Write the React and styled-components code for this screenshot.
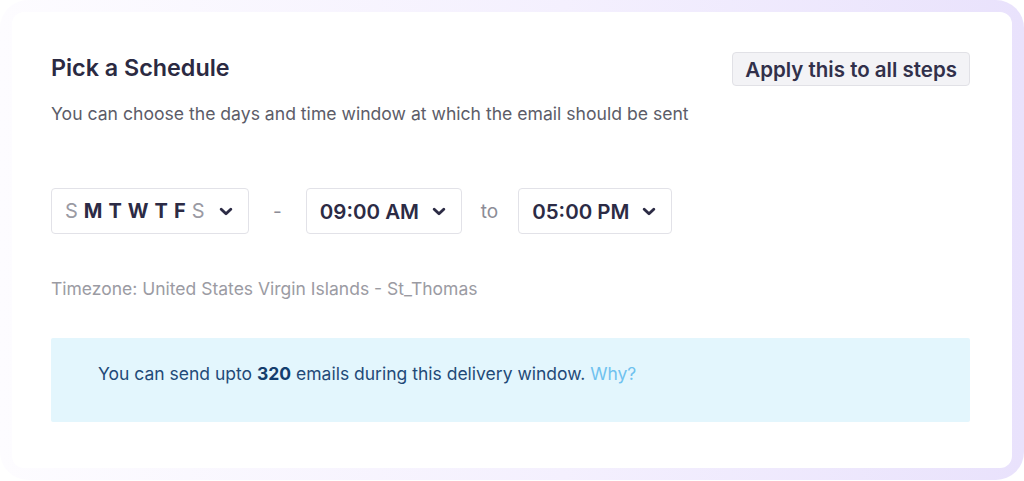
import styled, { createGlobalStyle } from "styled-components";

const GlobalStyle = createGlobalStyle`
  html, body {
    margin: 0;
    padding: 0;
    background: #ffffff;
  }
  body {
    font-family: Inter, "Noto Sans", sans-serif;
  }
`;

const Chevron = () => (
  <svg width="14" height="9" viewBox="0 0 14 9" fill="none">
    <path
      d="M2.2 2.2 L7 6.7 L11.8 2.2"
      stroke="#2c2b45"
      strokeWidth="2.9"
      strokeLinecap="round"
      strokeLinejoin="round"
    />
  </svg>
);

const days = [
  { label: "S", on: false },
  { label: "M", on: true },
  { label: "T", on: true },
  { label: "W", on: true },
  { label: "T", on: true },
  { label: "F", on: true },
  { label: "S", on: false },
];

export default function App() {
  return (
    <>
      <GlobalStyle />
      <Frame>
        <Card>
          <Header>
            <Title>Pick a Schedule</Title>
            <ApplyButton>Apply this to all steps</ApplyButton>
          </Header>
          <Subtitle>
            You can choose the days and time window at which the email should be sent
          </Subtitle>

          <SelectRow>
            <Select $width={198}>
              <Days>
                {days.map((d, i) => (
                  <Day key={i} $on={d.on}>
                    {d.label}
                  </Day>
                ))}
              </Days>
              <Chevron />
            </Select>
            <Separator $left={24} $right={24}>-</Separator>
            <Select $width={156}>
              <SelectValue>09:00 AM</SelectValue>
              <Chevron />
            </Select>
            <Separator $left={19} $right={20}>to</Separator>
            <Select $width={154}>
              <SelectValue>05:00 PM</SelectValue>
              <Chevron />
            </Select>
          </SelectRow>

          <Timezone>Timezone: United States Virgin Islands - St_Thomas</Timezone>

          <InfoBox>
            You can send upto <strong>320</strong> emails during this delivery window.{" "}
            <WhyLink>Why?</WhyLink>
          </InfoBox>
        </Card>
      </Frame>
    </>
  );
}

const Frame = styled.div`
  width: 1024px;
  height: 480px;
  box-sizing: border-box;
  padding: 12px;
  border-radius: 28px;
  background: linear-gradient(90deg, #fdfcff 0%, #f4f0fe 55%, #e9e2fc 100%);
`;

const Card = styled.div`
  height: 100%;
  box-sizing: border-box;
  background: #ffffff;
  border-radius: 12px;
  padding: 41px 42px 0 39px;
`;

const Header = styled.header`
  display: flex;
  justify-content: space-between;
  align-items: flex-start;
`;

const Title = styled.h2`
  margin: 0;
  font-size: 23.3px;
  line-height: 30px;
  font-weight: 600;
  color: #2b2a42;
`;

const ApplyButton = styled.button`
  margin-top: -1px;
  height: 34px;
  padding: 0 12px;
  border: 1px solid #e1e1e6;
  border-radius: 4px;
  background: #f3f3f6;
  font-family: inherit;
  font-size: 20.5px;
  font-weight: 600;
  color: #31304a;
  cursor: pointer;
`;

const Subtitle = styled.p`
  margin: 16px 0 0;
  font-size: 17.6px;
  line-height: 24px;
  color: #5c5c68;
`;

const SelectRow = styled.div`
  display: flex;
  align-items: center;
  margin-top: 62px;
`;

const Select = styled.div`
  width: ${(p) => p.$width}px;
  height: 46px;
  box-sizing: border-box;
  display: flex;
  align-items: center;
  justify-content: space-between;
  padding: 0 15px 0 13px;
  border: 1px solid #e2e2e8;
  border-radius: 4px;
  background: #ffffff;
`;

const Days = styled.div`
  display: flex;
  gap: 6px;
`;

const Day = styled.span`
  font-size: 20px;
  font-weight: ${(p) => (p.$on ? 700 : 400)};
  color: ${(p) => (p.$on ? "#2c2b45" : "#9a9aa3")};
`;

const SelectValue = styled.span`
  font-size: 20.5px;
  font-weight: 600;
  color: #2c2b45;
`;

const Separator = styled.span`
  margin: 0 ${(p) => p.$right}px 0 ${(p) => p.$left}px;
  font-size: 19px;
  color: #8c8c96;
`;

const Timezone = styled.p`
  margin: 44px 0 0;
  font-size: 17.5px;
  line-height: 22px;
  color: #9b9ba3;
`;

const InfoBox = styled.div`
  margin-top: 38px;
  height: 84px;
  box-sizing: border-box;
  padding: 24px 47px 0;
  background: #e3f6fd;
  border-radius: 2px;
  font-size: 17.5px;
  line-height: 24px;
  color: #1f4a78;

  & > strong {
    font-weight: 700;
    color: #133d6d;
  }
`;

const WhyLink = styled.a`
  color: #6fc2ef;
  cursor: pointer;
`;
